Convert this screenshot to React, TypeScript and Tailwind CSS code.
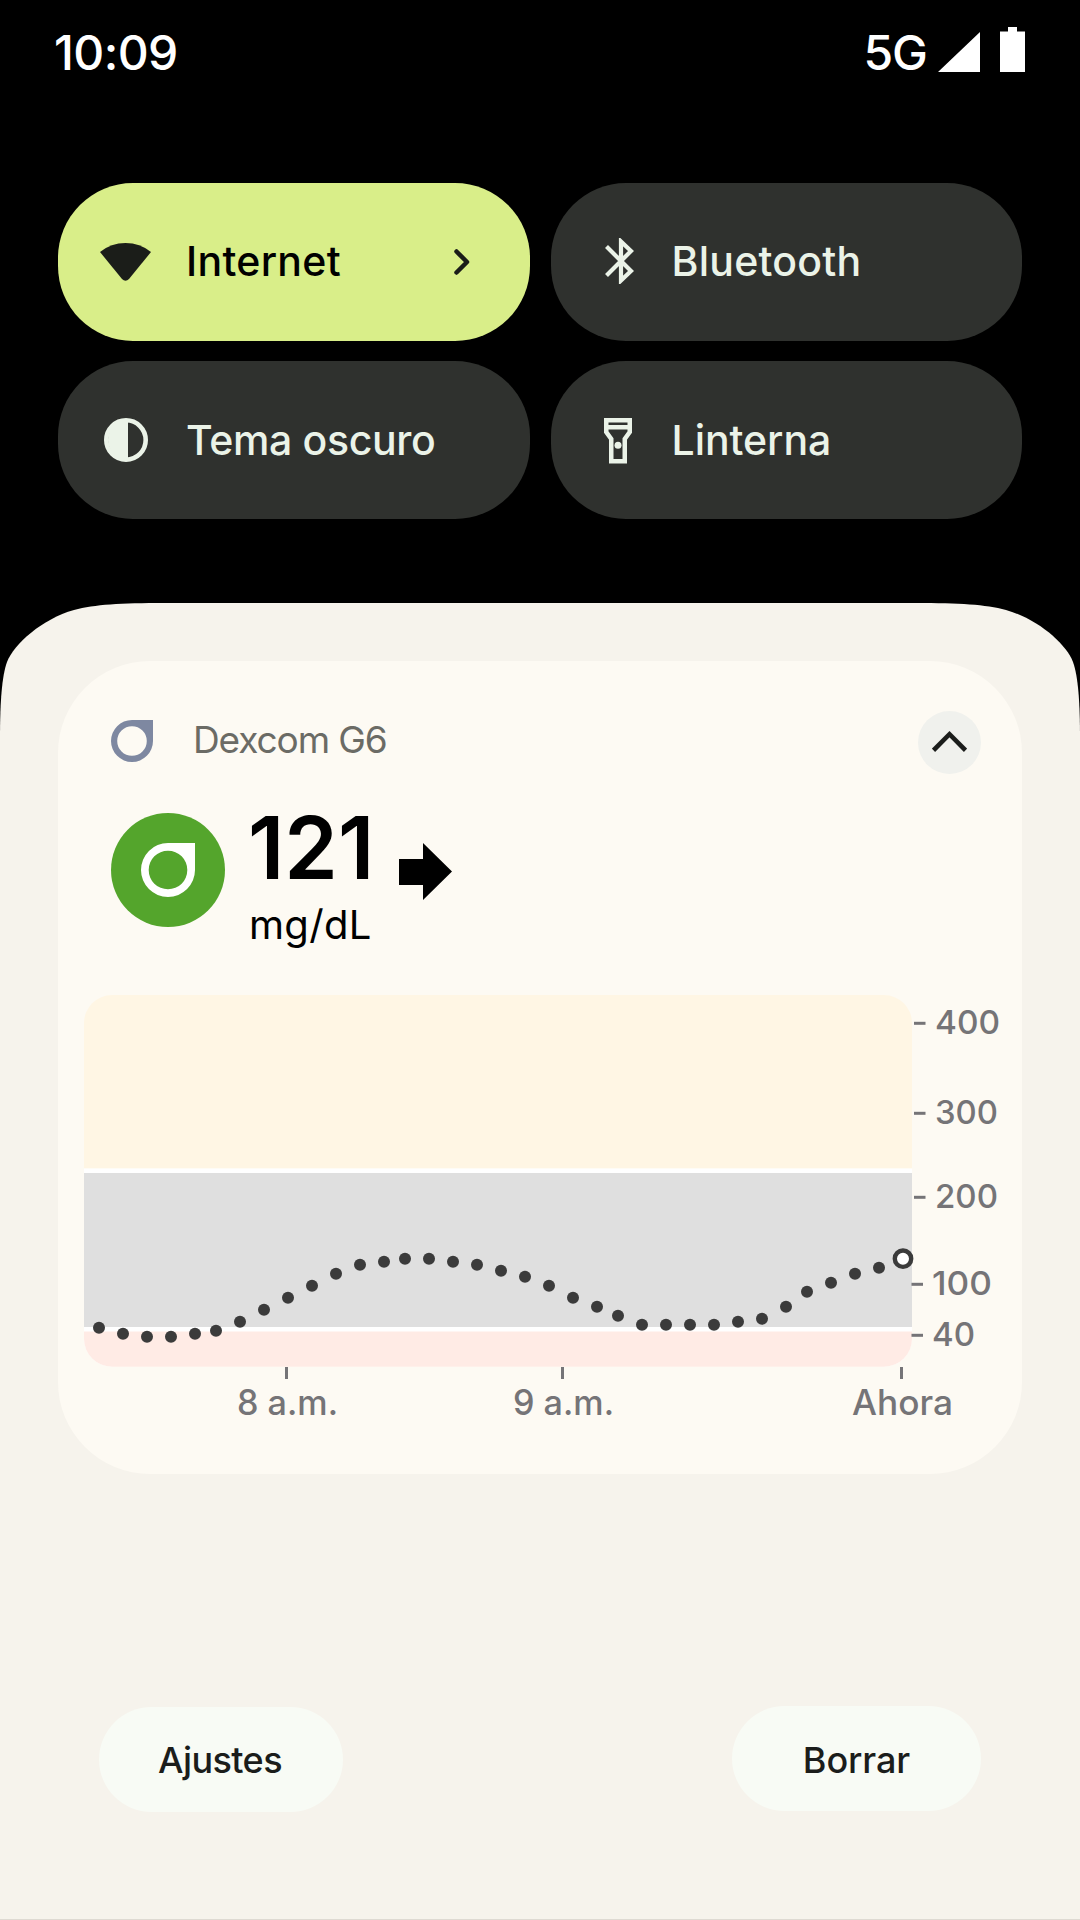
import type { ReactNode } from "react";

const readings = [
    [99, 1327.7], [123, 1333.7], [147, 1336.7], [171, 1336.7], [195, 1333.7], [216, 1330.7],
    [240, 1321.7], [264, 1309.7], [288, 1297.7], [312, 1285.7], [336, 1273.7], [360, 1264.7],
    [384, 1261.7], [405, 1258.7], [429, 1258.7], [453, 1261.7], [477, 1264.7], [501, 1270.7],
    [525, 1276.7], [549, 1285.7], [573, 1297.7], [597, 1306.7], [618, 1315.7], [642, 1324.7],
    [666, 1324.7], [690, 1324.7], [714, 1324.7], [738, 1321.7], [762, 1318.7], [786, 1306.7],
    [807, 1291.7], [831, 1282.7], [855, 1273.7], [879, 1267.7],
];

const levels = [
    { label: "400", tick: 914, y: 1023.3, x: 935, width: 65 },
    { label: "300", tick: 914, y: 1113.3, x: 935, width: 63 },
    { label: "200", tick: 914, y: 1197.3, x: 935, width: 63 },
    { label: "100", tick: 911.5, y: 1284.3, x: 932, width: 60 },
    { label: "40", tick: 911.5, y: 1335.3, x: 932, width: 43 },
];

const times = [
    { label: "8 a.m.", tick: 285, x: 237, width: 101 },
    { label: "9 a.m.", tick: 561, x: 513, width: 101 },
    { label: "Ahora", tick: 900, x: 852, width: 101 },
];

function Tile({ icon, label, labelClass, active, wide, children }: {
    icon: ReactNode;
    label: string;
    labelClass: string;
    active?: boolean;
    wide?: boolean;
    children?: ReactNode;
}) {
    return (
        <div
            className={`flex h-[158px] items-center rounded-[75px] ${active ? "bg-[#d9ee89] text-black" : "bg-[#2f312e] text-[#ebf3e8]"} ${wide ? "pl-[42px]" : "pl-[40px]"}`}
        >
            <div className={wide ? "w-[86px]" : "w-[81px]"}>{icon}</div>
            <span className={`text-[41px] leading-none font-medium ${labelClass}`}>{label}</span>
            {children}
        </div>
    );
}

function DexcomMark({ className, inner }: { className: string; inner: number }) {
    return (
        <svg viewBox="0 0 54 54" className={className} fill="currentColor">
            <path
                fillRule="evenodd"
                d={`M27 0H54V27A27 27 0 1 1 27 0ZM27 ${27 - inner}A${inner} ${inner} 0 1 0 27 ${27 + inner}A${inner} ${inner} 0 1 0 27 ${27 - inner}Z`}
            />
        </svg>
    );
}

function GlucoseChart() {
    return (
        <svg viewBox="84 995 916 430" className="ml-[26px] h-[430px] w-[916px] overflow-visible">
            <clipPath id="plot">
                <rect x="84" y="995" width="828" height="371.7" rx="28" />
            </clipPath>
            <g clipPath="url(#plot)">
                <rect x="84" y="995" width="828" height="173.5" fill="#fff6e4" />
                <rect x="84" y="1168.5" width="828" height="200" fill="#fff" />
                <rect x="84" y="1173" width="828" height="154" fill="#dfdfdf" />
                <rect x="84" y="1331.5" width="828" height="36" fill="#ffebe5" />
            </g>
            {readings.map(([x, y]) => (
                <circle key={x} cx={x} cy={y} r="6" fill="#3b3b3b" />
            ))}
            <circle cx="903" cy="1258.7" r="8.2" fill="#fff" stroke="#3b3b3b" strokeWidth="4.4" />
            <g fill="#757477" className="font-medium">
                {levels.map((l) => (
                    <g key={l.label}>
                        <rect x={l.tick} y={l.y - 1.5} width="11.5" height="3" />
                        <text x={l.x} y={l.y + 11} textLength={l.width} lengthAdjust="spacingAndGlyphs" fontSize="33">
                            {l.label}
                        </text>
                    </g>
                ))}
                {times.map((t) => (
                    <g key={t.label}>
                        <rect x={t.tick} y="1367" width="3" height="12" />
                        <text x={t.x} y="1415" textLength={t.width} lengthAdjust="spacingAndGlyphs" fontSize="35">
                            {t.label}
                        </text>
                    </g>
                ))}
            </g>
        </svg>
    );
}

export default function App() {
    return (
        <main className="flex h-[1920px] w-[1080px] flex-col overflow-hidden bg-black font-['Inter',sans-serif]">
            <header className="flex h-[183px] items-start justify-between pt-[27px] pr-[55px] pl-[54px] text-white">
                <span className="mt-[2px] text-[48px] leading-none font-medium tracking-[-0.6px]">10:09</span>
                <div className="flex items-start">
                    <span className="mt-[2px] mr-[11px] text-[48px] leading-none font-medium tracking-[-1px]">5G</span>
                    <svg viewBox="0 0 87 45" className="h-[45px] w-[87px]" fill="currentColor">
                        <path d="M0 45L42 5V45ZM62 4.500H70V0H79V4.500H87V45H62Z" />
                    </svg>
                </div>
            </header>

            <section className="grid h-[420px] grid-cols-[471.5px_471.5px] content-start gap-x-[21px] gap-y-5 pl-[58px]">
                <Tile
                    label="Internet"
                    labelClass="-mt-[2px] tracking-[0.3px]"
                    active
                    wide
                    icon={
                        <svg viewBox="0 0 51 38" className="h-[38px] w-[51px]" fill="#1b1d19">
                            <path d="M0 9Q11 0 25.500 0T51 9L29 36Q25.500 39.500 22 36Z" />
                        </svg>
                    }
                >
                    <svg viewBox="0 0 16 26" className="mr-[60px] ml-auto h-[26px] w-4" fill="none" stroke="#1b1d19" strokeWidth="4.500" strokeLinecap="round" strokeLinejoin="round">
                        <path d="M2.500 2.500L13 13L2.500 23.500" />
                    </svg>
                </Tile>
                <Tile
                    label="Bluetooth"
                    labelClass="-mt-[2px] tracking-[0.25px]"
                    icon={
                        <svg viewBox="0 0 29 46" className="-mt-[2px] ml-[14px] h-[46px] w-[29px]" fill="none" stroke="currentColor" strokeWidth="4.200">
                            <path d="M1.500 8.500L26 33L16 42.500V3.500L26 13L1.500 37.500" />
                        </svg>
                    }
                />
                <Tile
                    label="Tema oscuro"
                    labelClass="tracking-[-0.35px]"
                    wide
                    icon={
                        <svg viewBox="0 0 44 44" className="ml-[4px] size-11">
                            <circle cx="22" cy="22" r="19.700" fill="none" stroke="currentColor" strokeWidth="4.600" />
                            <path d="M24 2V42A20 20 0 1 1 24 2Z" fill="currentColor" />
                        </svg>
                    }
                />
                <Tile
                    label="Linterna"
                    labelClass="tracking-[-0.05px]"
                    icon={
                        <svg viewBox="0 0 28 46" className="mt-[2px] ml-[13px] h-[46px] w-7" fill="none" stroke="currentColor" strokeWidth="4.500">
                            <path d="M2.250 2.250H25.750V14L20.750 21V43.300H7.250V21L2.250 14ZM2.250 9.200H25.750" />
                            <circle cx="14" cy="27.300" r="3.500" fill="currentColor" stroke="none" />
                        </svg>
                    }
                />
            </section>

            <section className="flex flex-1 flex-col border-b border-[#dedad2] bg-[#f6f3ec] pt-[58px] [clip-path:path('M0_135C0_98_2_73_7_59C14_41_42_16_74_7C95_1.5_120_0_165_0H915C960_0_985_1.5_1006_7C1038_16_1066_41_1073_59C1078_73_1080_98_1080_135V1317H0Z')]">
                <article className="ml-[58px] flex h-[813px] w-[964px] flex-col rounded-[92px] bg-[#fdfaf3]">
                    <div className="flex h-[151px] items-start pt-[50px] pr-[41.5px] pl-[53px]">
                        <DexcomMark className="mt-[9px] size-[42px] text-[#7e88a1]" inner={19} />
                        <span className="mt-[8px] ml-[40px] text-[37px] leading-[42px] tracking-[-1.1px] text-[#6b6b65]">Dexcom G6</span>
                        <div className="ml-auto flex size-[63px] items-center justify-center rounded-full bg-[#f0f1ed]">
                            <svg viewBox="0 0 35 21" className="-mt-[2px] h-[21px] w-[35px]" fill="none" stroke="#1b1d1b" strokeWidth="4.500">
                                <path d="M1.500 19.300L17.500 3.200L33.500 19.300" />
                            </svg>
                        </div>
                    </div>
                    <div className="flex h-[183px] items-start pl-[53px]">
                        <div className="mt-px flex size-[114px] items-center justify-center rounded-full bg-[#54a52c] text-white">
                            <DexcomMark className="size-[54px]" inner={19.3} />
                        </div>
                        <div className="ml-[22px] flex w-[152px] flex-col text-black">
                            <span className="ml-px text-[86px] leading-[72px] font-semibold">121</span>
                            <span className="mt-[19px] ml-[2px] text-[40px] leading-[44px] tracking-[0.3px]">mg/dL</span>
                        </div>
                        <svg viewBox="0 0 53 57" className="mt-[31px] h-[57px] w-[53px]">
                            <path d="M0 16H24V0L53 28.500L24 57V42H0Z" />
                        </svg>
                    </div>
                    <GlucoseChart />
                </article>

                <div className="mt-[232px] flex items-start justify-between pr-[99.500px] pl-[99px] text-[36px] font-medium text-[#1b1d1b]">
                    <button className="mt-px h-[105px] w-[244px] rounded-full bg-[#f8fbf5] pr-[2px] tracking-[-0.6px]">Ajustes</button>
                    <button className="h-[105px] w-[249px] rounded-full bg-[#f8fbf5] pt-[2px] pl-px tracking-[-0.1px]">Borrar</button>
                </div>
            </section>
        </main>
    );
}
